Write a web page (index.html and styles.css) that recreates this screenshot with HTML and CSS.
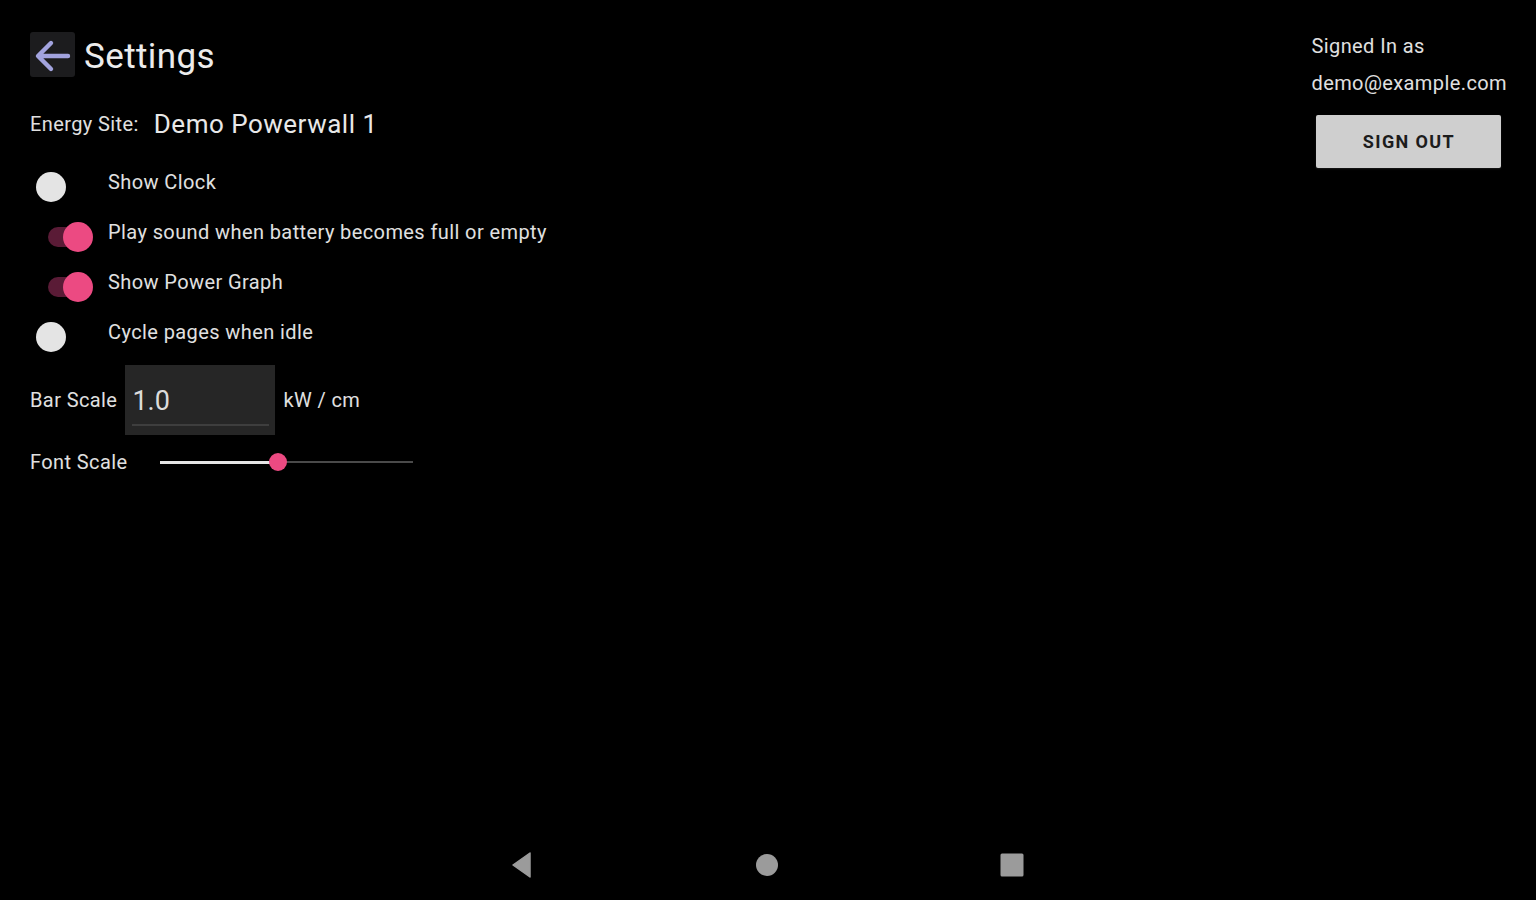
FILE: index.html
```html
<!DOCTYPE html>
<html>
<head>
<meta charset="utf-8">
<link rel="stylesheet" href="styles.css">
</head>
<body>
<div class="screen">
  <div class="main">
    <div class="left">
      <div class="header">
        <div class="back-btn">
          <svg width="45" height="45" viewBox="0 0 45 45">
            <path d="M38 24 H9 M21 11 L8 24 L21 37" fill="none" stroke="#a2a3de" stroke-width="4.4" stroke-linecap="round" stroke-linejoin="round"/>
          </svg>
        </div>
        <div class="title">Settings</div>
      </div>
      <div class="site-row">
        <span class="label">Energy Site:</span>
        <span class="site-name">Demo Powerwall 1</span>
      </div>
      <div class="toggle-row">
        <div class="switch"><div class="track"></div><div class="thumb"></div></div>
        <span class="label">Show Clock</span>
      </div>
      <div class="toggle-row">
        <div class="switch on"><div class="track"></div><div class="thumb"></div></div>
        <span class="label">Play sound when battery becomes full or empty</span>
      </div>
      <div class="toggle-row">
        <div class="switch on"><div class="track"></div><div class="thumb"></div></div>
        <span class="label">Show Power Graph</span>
      </div>
      <div class="toggle-row">
        <div class="switch"><div class="track"></div><div class="thumb"></div></div>
        <span class="label">Cycle pages when idle</span>
      </div>
      <div class="bar-row">
        <span class="label">Bar Scale</span>
        <div class="input-box">
          <span class="input-value">1.0</span>
          <div class="input-line"></div>
        </div>
        <span class="label">kW / cm</span>
      </div>
      <div class="font-row">
        <span class="label">Font Scale</span>
        <div class="slider">
          <div class="slider-active" style="width:118px"></div>
          <div class="slider-thumb"></div>
          <div class="slider-rest"></div>
        </div>
      </div>
    </div>
    <div class="right">
      <div class="signed">Signed In as</div>
      <div class="email">demo@example.com</div>
      <button class="sign-out">SIGN OUT</button>
    </div>
  </div>
  <div class="navbar">
    <svg class="nav-icon" width="24" height="26" viewBox="0 0 24 26">
      <path d="M20 1 L20 25 L3 13 Z" fill="#9b9b9b" stroke="#9b9b9b" stroke-width="1.5" stroke-linejoin="round"/>
    </svg>
    <svg class="nav-icon" width="24" height="26" viewBox="0 0 24 26">
      <circle cx="12" cy="13" r="11" fill="#9b9b9b"/>
    </svg>
    <svg class="nav-icon" width="24" height="26" viewBox="0 0 24 26">
      <rect x="0.5" y="1.5" width="23" height="23" rx="1.5" fill="#9b9b9b"/>
    </svg>
  </div>
</div>
</body>
</html>
```

FILE: styles.css
```css
* { box-sizing: border-box; }
html, body {
  margin: 0;
  padding: 0;
  background: #000;
}
body {
  font-family: Roboto, "Liberation Sans", sans-serif;
  color: #e2e2e2;
}
.screen {
  width: 1536px;
  height: 900px;
  display: flex;
  flex-direction: column;
}
.main {
  flex: 1;
  display: flex;
  justify-content: space-between;
  padding: 32px 29px 0 30px;
}
.left {
  display: flex;
  flex-direction: column;
}
.header {
  display: flex;
  align-items: center;
  height: 45px;
  gap: 9px;
}
.back-btn {
  width: 45px;
  height: 45px;
  background: #1c1c1e;
  border-radius: 3px;
  display: flex;
}
.title {
  font-size: 35px;
  color: #ececec;
  letter-spacing: 0.4px;
  padding-top: 3px;
}
.label {
  font-size: 20px;
  letter-spacing: 0.4px;
  color: #e0e0e0;
}
.site-row {
  display: flex;
  align-items: center;
  height: 30px;
  margin-top: 32px;
  gap: 15px;
}
.site-name {
  font-size: 26px;
  color: #e8e8e8;
  letter-spacing: 0.5px;
}
.toggle-row {
  display: flex;
  align-items: center;
  height: 50px;
}
.site-row + .toggle-row { margin-top: 18px; }
.switch {
  position: relative;
  width: 78px;
  height: 50px;
  flex: none;
}
.switch .track {
  position: absolute;
  left: 18px;
  top: 20px;
  width: 34px;
  height: 20px;
  border-radius: 10px;
  background: transparent;
}
.switch .thumb {
  position: absolute;
  left: 6px;
  top: 15px;
  width: 30px;
  height: 30px;
  border-radius: 50%;
  background: #e4e4e4;
}
.switch.on .track { background: #5a1b36; }
.switch.on .thumb {
  left: 33px;
  background: #ec4a82;
}
.bar-row {
  display: flex;
  align-items: center;
  margin-top: 8px;
  gap: 8px;
}
.input-box {
  width: 150px;
  height: 70px;
  background: #262626;
  position: relative;
  padding: 22px 6px 0 7px;
}
.input-value {
  display: block;
  font-size: 27px;
  line-height: 28px;
  color: #dcdcdc;
}
.input-line {
  margin-top: 9px;
  height: 2px;
  background: #3e3e3e;
}
.font-row {
  display: flex;
  align-items: center;
  height: 34px;
  margin-top: 10px;
}
.slider {
  margin-left: 32px;
  width: 253px;
  display: flex;
  align-items: center;
}
.slider-active {
  height: 3px;
  background: #e6e6e6;
}
.slider-thumb {
  width: 18px;
  height: 18px;
  border-radius: 50%;
  background: #ec4a82;
  margin: 0 -9px;
  position: relative;
  z-index: 1;
}
.slider-rest {
  flex: 1;
  height: 2px;
  background: #4a4a4a;
}
.right {
  display: flex;
  flex-direction: column;
  align-items: flex-start;
  padding-top: 1px;
}
.signed, .email {
  font-size: 20px;
  letter-spacing: 0.4px;
  height: 37px;
  line-height: 26px;
  color: #e0e0e0;
}
.sign-out {
  margin-top: 8px;
  margin-left: 5px;
  width: 185px;
  height: 53px;
  background: #cfcfcf;
  border: none;
  border-radius: 2px;
  font-family: Roboto, "Liberation Sans", sans-serif;
  font-weight: 700;
  font-size: 18px;
  color: #1c1c1c;
  letter-spacing: 1.4px;
  box-shadow: 0 1px 2px rgba(255,255,255,0.1);
}
.navbar {
  height: 72px;
  display: flex;
  justify-content: center;
  align-items: center;
  gap: 221px;
  padding-top: 2px;
  padding-right: 2px;
}
.nav-icon { display: block; }
```
